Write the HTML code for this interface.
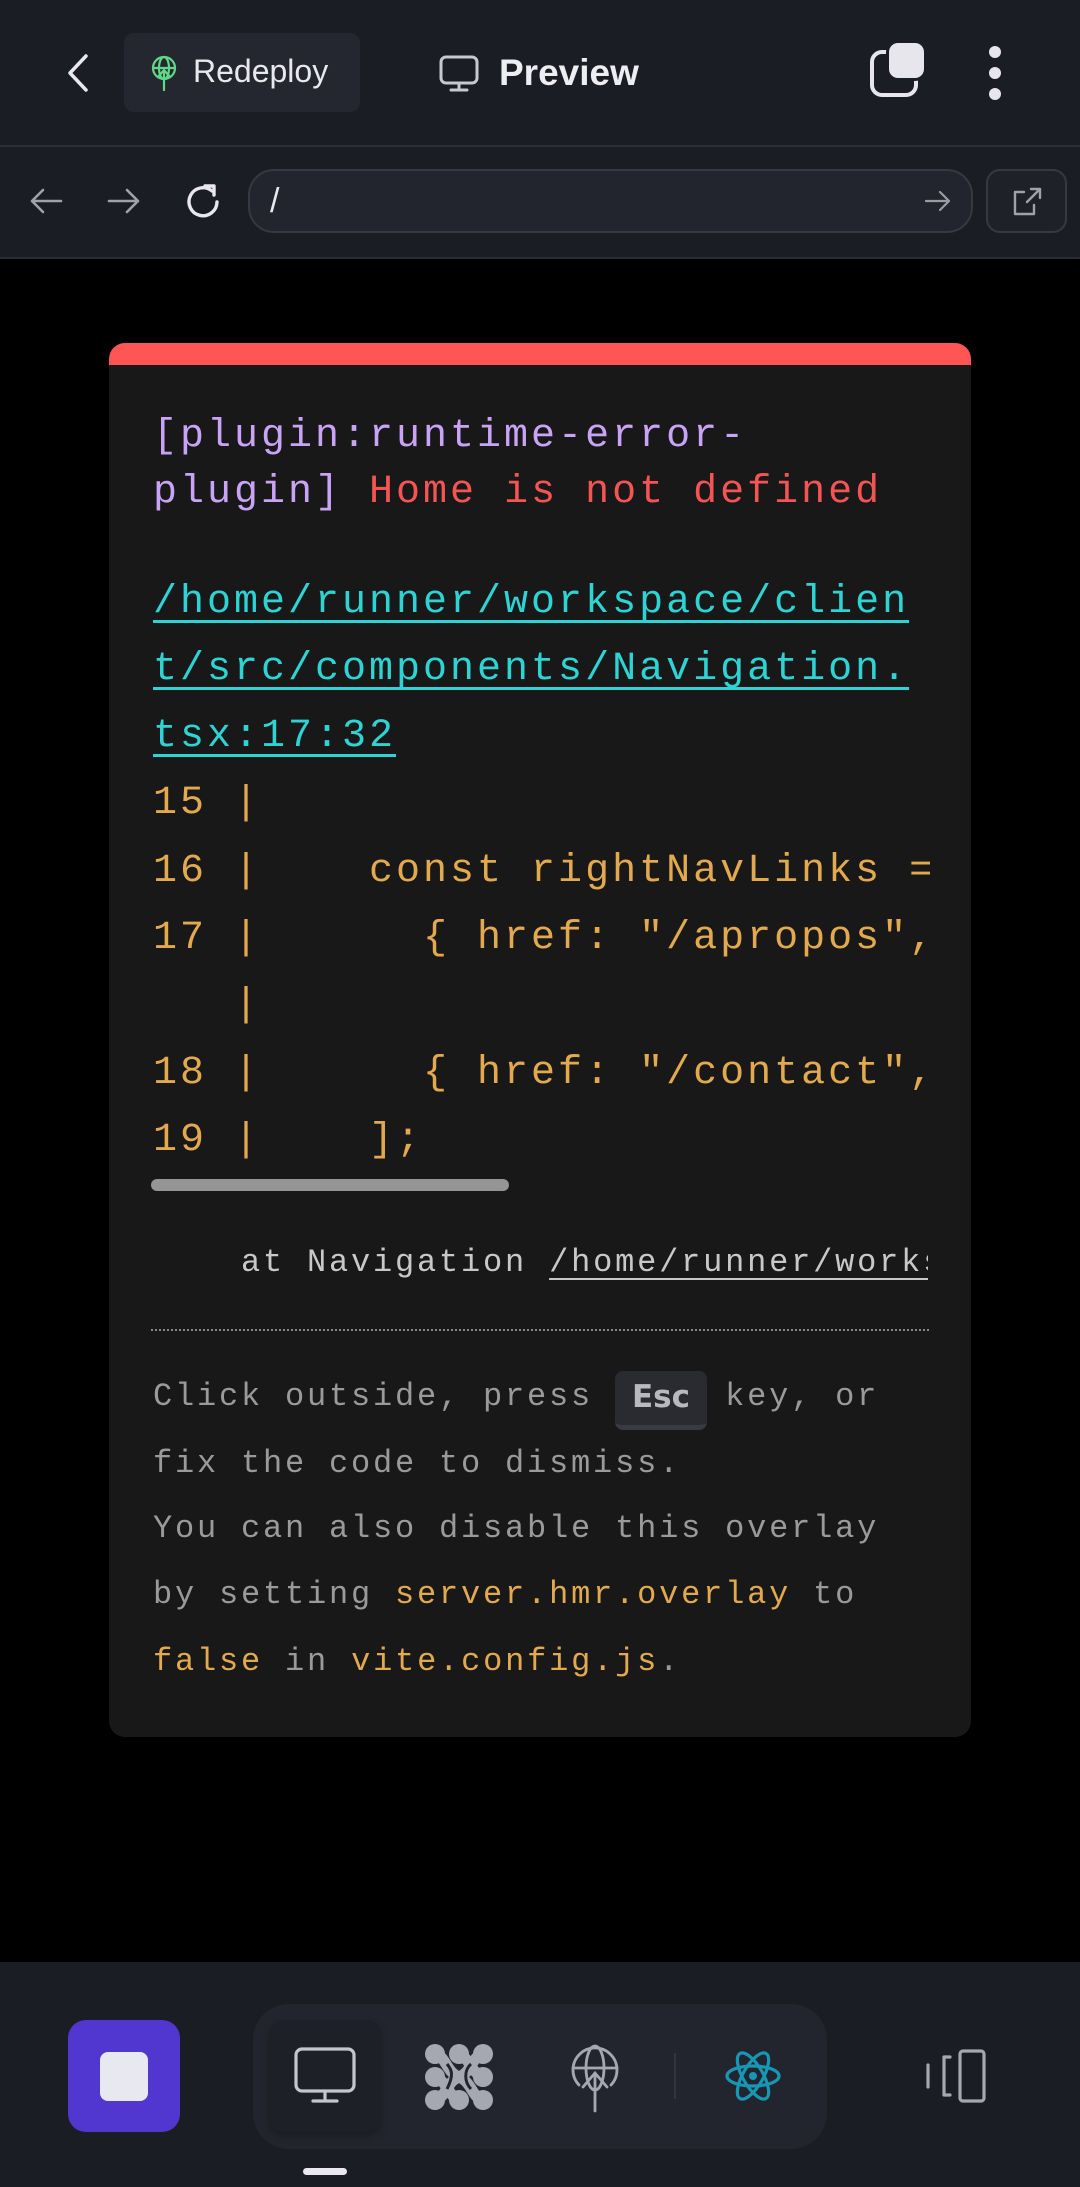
<!DOCTYPE html>
<html><head><meta charset="utf-8">
<style>
*{margin:0;padding:0;box-sizing:border-box}
body{width:1080px;height:2187px;background:#000;position:relative;overflow:hidden;font-family:"Liberation Sans",sans-serif}
.abs{position:absolute}
.mono{font-family:"Liberation Mono",monospace;font-size:40px;letter-spacing:3px;white-space:pre;position:absolute;left:153px;line-height:50px}
.sm{font-size:32px;letter-spacing:2.8px}
.pu{color:#c9a3f5}.rd{color:#f55454}.cy{color:#2ed3d4;text-decoration:underline;text-decoration-thickness:3px;text-underline-offset:8px}
.yl{color:#e3a94f}.gr{color:#9a9a9a}.lg{color:#c8c8c8}
</style></head><body>
<!-- header -->
<div class="abs" style="left:0;top:0;width:1080px;height:145px;background:#1b1d24"></div>
<div class="abs" style="left:0;top:145px;width:1080px;height:2px;background:#2c2e37"></div>
<div class="abs" style="left:0;top:147px;width:1080px;height:111px;background:#1b1d24"></div>
<div class="abs" style="left:0;top:257px;width:1080px;height:2px;background:#2a2c34"></div>
<svg class="abs" style="left:62px;top:52px" width="30" height="42" viewBox="0 0 30 42"><path d="M24 4 L8 21 L24 38" fill="none" stroke="#e8e8ee" stroke-width="3.5" stroke-linecap="round" stroke-linejoin="round"/></svg>
<div class="abs" style="left:124px;top:33px;width:236px;height:79px;background:#252730;border-radius:10px"></div>
<svg class="abs" style="left:148px;top:54px" width="32" height="38" viewBox="0 0 32 38"><g fill="none" stroke="#5fd88a" stroke-width="2.2" stroke-linecap="round"><circle cx="16" cy="14" r="11"/><ellipse cx="16" cy="14" rx="5" ry="11"/><line x1="5" y1="14" x2="27" y2="14"/><path d="M16 36 V17 M10 23 L16 16 L22 23"/></g></svg>
<div class="abs" style="left:193px;top:51px;font-size:32px;color:#e8e8ee;line-height:40px">Redeploy</div>
<svg class="abs" style="left:438px;top:54px" width="42" height="40" viewBox="0 0 42 40"><g fill="none" stroke="#c8c9d0" stroke-width="3" stroke-linecap="round"><rect x="3" y="3" width="36" height="26" rx="5"/><path d="M21 29 V36 M13 36 H29"/></g></svg>
<div class="abs" style="left:499px;top:51px;font-size:37px;font-weight:bold;color:#eeeef2;line-height:44px">Preview</div>
<div class="abs" style="left:870px;top:50px;width:48px;height:47px;border:4px solid #e6e6ec;border-radius:12px"></div>
<div class="abs" style="left:889px;top:43px;width:35px;height:35px;background:#e6e6ec;border-radius:9px;box-shadow:0 0 0 3px #1b1d24"></div>
<div class="abs" style="left:989px;top:46px;width:12px;height:12px;border-radius:50%;background:#e6e6ec"></div>
<div class="abs" style="left:989px;top:67px;width:12px;height:12px;border-radius:50%;background:#e6e6ec"></div>
<div class="abs" style="left:989px;top:88px;width:12px;height:12px;border-radius:50%;background:#e6e6ec"></div>
<!-- toolbar -->
<svg class="abs" style="left:28px;top:186px" width="36" height="30" viewBox="0 0 36 30"><path d="M33 15 H4 M15 4 L4 15 L15 26" fill="none" stroke="#a0a2ab" stroke-width="2.6" stroke-linecap="round" stroke-linejoin="round"/></svg>
<svg class="abs" style="left:106px;top:186px" width="36" height="30" viewBox="0 0 36 30"><path d="M3 15 H32 M21 4 L32 15 L21 26" fill="none" stroke="#a0a2ab" stroke-width="2.6" stroke-linecap="round" stroke-linejoin="round"/></svg>
<svg class="abs" style="left:183px;top:181px" width="42" height="42" viewBox="0 0 42 42"><path d="M34 21 A14 14 0 1 1 29 10" fill="none" stroke="#e8e8ee" stroke-width="3.4" stroke-linecap="round"/><path d="M22 5 H31 V14" fill="none" stroke="#e8e8ee" stroke-width="3.4" stroke-linecap="round" stroke-linejoin="round"/></svg>
<div class="abs" style="left:248px;top:169px;width:725px;height:64px;background:#23252e;border:2px solid #363842;border-radius:26px"></div>
<div class="abs" style="left:270px;top:180px;font-size:34px;color:#e8e8ee;line-height:42px">/</div>
<svg class="abs" style="left:924px;top:188px" width="28" height="26" viewBox="0 0 28 26"><path d="M2 13 H25 M16 4 L25 13 L16 22" fill="none" stroke="#9a9ca5" stroke-width="2.2" stroke-linecap="round" stroke-linejoin="round"/></svg>
<div class="abs" style="left:986px;top:169px;width:81px;height:64px;background:#1f2128;border:2px solid #363842;border-radius:14px"></div>
<svg class="abs" style="left:1010px;top:186px" width="34" height="32" viewBox="0 0 34 32"><g fill="none" stroke="#a0a2ab" stroke-width="2.4" stroke-linecap="round" stroke-linejoin="round"><path d="M14 6 H5 V28 H24 V19"/><path d="M17 16 L30 3 M21 3 H30 V12"/></g></svg>
<!-- card -->
<div class="abs" style="left:109px;top:343px;width:862px;height:1394px;background:#181818;border-radius:16px;overflow:hidden"><div style="height:22px;background:#ff5555"></div></div>
<div class="mono pu" style="top:412px">[plugin:runtime-error-</div>
<div class="mono" style="top:468px"><span class="pu">plugin]</span> <span class="rd">Home is not defined</span></div>
<div class="mono" style="top:578px"><span class="cy">/home/runner/workspace/clien</span></div>
<div class="mono" style="top:645px"><span class="cy">t/src/components/Navigation.</span></div>
<div class="mono" style="top:712px"><span class="cy">tsx:17:32</span></div>
<div class="abs" style="left:150px;top:770px;width:780px;height:400px;overflow:hidden">
<div class="mono yl" style="left:3px;top:9px">15 |</div>
<div class="mono yl" style="left:3px;top:77px">16 |    const rightNavLinks = [</div>
<div class="mono yl" style="left:3px;top:144px">17 |      { href: "/apropos", label</div>
<div class="mono yl" style="left:3px;top:211px">   |</div>
<div class="mono yl" style="left:3px;top:279px">18 |      { href: "/contact", label</div>
<div class="mono yl" style="left:3px;top:346px">19 |    ];</div>
</div>
<div class="abs" style="left:151px;top:1179px;width:358px;height:12px;border-radius:6px;background:#959595"></div>
<div class="abs" style="left:153px;top:1200px;width:775px;height:100px;overflow:hidden"><div class="mono sm lg" style="left:0;top:38px">    at Navigation <span style="text-decoration:underline;text-decoration-thickness:2px;text-underline-offset:7px">/home/runner/workspace</span></div></div>
<div class="abs" style="left:151px;top:1329px;width:778px;height:0;border-top:2px dotted #8a8a8a"></div>
<div class="abs" style="left:615px;top:1371px;width:92px;height:59px;background:#2a2b31;border-radius:8px;border-bottom:5px solid #3a3b42;font-family:'DejaVu Sans',sans-serif;font-weight:bold;color:#b8b9be;font-size:31px;line-height:52px;text-align:center">Esc</div>
<div class="mono sm gr" style="top:1372px">Click outside, press      key, or</div>
<div class="mono sm gr" style="top:1439px">fix the code to dismiss.</div>
<div class="mono sm gr" style="top:1504px">You can also disable this overlay</div>
<div class="mono sm gr" style="top:1570px">by setting <span class="yl">server.hmr.overlay</span> to</div>
<div class="mono sm" style="top:1637px"><span class="yl">false</span> <span class="gr">in</span> <span class="yl">vite.config.js</span><span class="gr">.</span></div>
<!-- bottom bar -->
<div class="abs" style="left:0;top:1962px;width:1080px;height:225px;background:#1b1d24"></div>
<div class="abs" style="left:68px;top:2020px;width:112px;height:112px;background:#5236d0;border-radius:18px"></div>
<div class="abs" style="left:100px;top:2052px;width:48px;height:49px;background:#e8e8f0;border-radius:8px"></div>
<div class="abs" style="left:253px;top:2004px;width:574px;height:145px;background:#23252e;border-radius:36px"></div>
<div class="abs" style="left:269px;top:2020px;width:112px;height:112px;background:#1e2028;border-radius:14px;box-shadow:0 4px 8px rgba(0,0,0,0.25)"></div>
<svg class="abs" style="left:294px;top:2047px" width="62" height="58" viewBox="0 0 62 58"><g fill="none" stroke="#c4c6cd" stroke-width="3.2" stroke-linecap="round"><rect x="2" y="2" width="58" height="42" rx="6"/><path d="M31 44 V53 M19 54 H43"/></g></svg>
<svg class="abs" style="left:424px;top:2042px" width="70" height="70" viewBox="0 0 70 70"><g fill="#a5a8b1"><circle cx="11" cy="12" r="10"/><circle cx="35" cy="12" r="10"/><circle cx="59" cy="12" r="10"/><circle cx="11" cy="35" r="10"/><circle cx="59" cy="35" r="10"/><circle cx="11" cy="58" r="10"/><circle cx="35" cy="58" r="10"/><circle cx="59" cy="58" r="10"/></g><g fill="none" stroke="#a5a8b1" stroke-width="11" stroke-linecap="round"><path d="M11 12 C22 14 22 30 35 35 C48 40 48 56 59 58"/><path d="M35 12 C46 16 46 30 59 35"/><path d="M11 35 C24 40 24 54 35 58"/><path d="M59 12 C48 14 48 30 35 35 C22 40 22 56 11 58"/></g><g fill="none" stroke="#23252e" stroke-width="3"><path d="M23 22 C28 28 30 33 23 47"/><path d="M47 22 C40 28 40 40 47 47"/></g></svg>
<svg class="abs" style="left:569px;top:2043px" width="52" height="70" viewBox="0 0 52 70"><g fill="none" stroke="#a5a8b1" stroke-width="2.8" stroke-linecap="round"><path d="M10 42 A22 22 0 1 1 42 42"/><ellipse cx="26" cy="25" rx="9" ry="22"/><line x1="4" y1="25" x2="48" y2="25"/><path d="M26 68 V30 M14 44 L26 30 L38 44"/></g></svg>
<div class="abs" style="left:674px;top:2053px;width:2px;height:46px;background:#33353e"></div>
<svg class="abs" style="left:724px;top:2048px" width="58" height="56" viewBox="0 0 58 56"><g fill="none" stroke="#1797b5" stroke-width="3.2"><ellipse cx="29" cy="28" rx="26" ry="10"/><ellipse cx="29" cy="28" rx="26" ry="10" transform="rotate(60 29 28)"/><ellipse cx="29" cy="28" rx="26" ry="10" transform="rotate(-60 29 28)"/></g><circle cx="29" cy="28" r="4" fill="#1797b5"/></svg>
<svg class="abs" style="left:922px;top:2049px" width="68" height="54" viewBox="0 0 68 54"><g fill="none" stroke="#a5a8b1" stroke-width="3.2" stroke-linecap="round" stroke-linejoin="round"><rect x="38" y="2" width="24" height="50" rx="3"/><path d="M28 8 H22 V46 H28"/><path d="M6 16 V38"/></g></svg>
<div class="abs" style="left:303px;top:2168px;width:44px;height:7px;border-radius:4px;background:#e8e8ee"></div>
</body></html>
